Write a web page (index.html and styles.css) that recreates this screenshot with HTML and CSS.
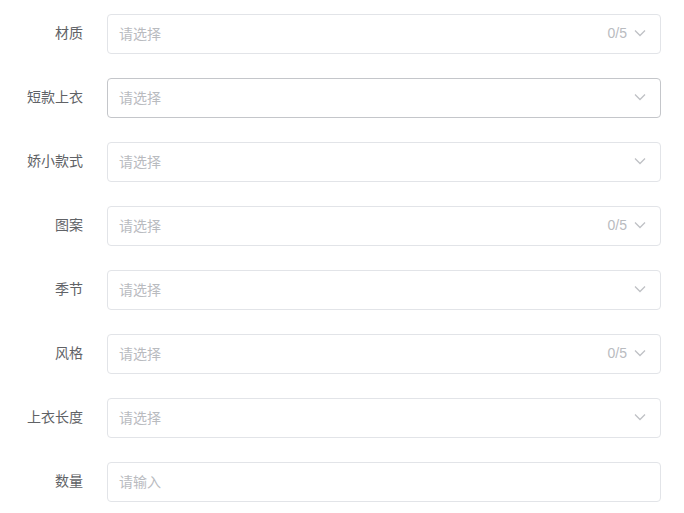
FILE: index.html
```html
<!DOCTYPE html>
<html>
<head>
<meta charset="utf-8">
<link rel="stylesheet" href="styles.css">
</head>
<body>
<form class="form">
  <div class="row"><label class="label">材质</label><div class="field"><span class="ph">请选择</span><span class="count">0/5</span><svg class="chev" viewBox="0 0 12 8"><path d="M1 1.5 L6 6.5 L11 1.5" /></svg></div></div>
  <div class="row"><label class="label">短款上衣</label><div class="field hover"><span class="ph">请选择</span><svg class="chev" viewBox="0 0 12 8"><path d="M1 1.5 L6 6.5 L11 1.5" /></svg></div></div>
  <div class="row"><label class="label">娇小款式</label><div class="field"><span class="ph">请选择</span><svg class="chev" viewBox="0 0 12 8"><path d="M1 1.5 L6 6.5 L11 1.5" /></svg></div></div>
  <div class="row"><label class="label">图案</label><div class="field"><span class="ph">请选择</span><span class="count">0/5</span><svg class="chev" viewBox="0 0 12 8"><path d="M1 1.5 L6 6.5 L11 1.5" /></svg></div></div>
  <div class="row"><label class="label">季节</label><div class="field"><span class="ph">请选择</span><svg class="chev" viewBox="0 0 12 8"><path d="M1 1.5 L6 6.5 L11 1.5" /></svg></div></div>
  <div class="row"><label class="label">风格</label><div class="field"><span class="ph">请选择</span><span class="count">0/5</span><svg class="chev" viewBox="0 0 12 8"><path d="M1 1.5 L6 6.5 L11 1.5" /></svg></div></div>
  <div class="row"><label class="label">上衣长度</label><div class="field"><span class="ph">请选择</span><svg class="chev" viewBox="0 0 12 8"><path d="M1 1.5 L6 6.5 L11 1.5" /></svg></div></div>
  <div class="row"><label class="label">数量</label><div class="field"><span class="ph">请输入</span></div></div>
</form>
</body>
</html>
```
FILE: styles.css
```css
html, body {
  margin: 0;
  padding: 0;
  background: #fff;
}
body {
  font-family: "Helvetica Neue", "Liberation Sans", "Noto Sans CJK SC", sans-serif;
  font-size: 14px;
}
.form {
  display: flex;
  flex-direction: column;
  gap: 24px;
  padding-top: 14px;
}
.row {
  display: flex;
  align-items: center;
  gap: 24px;
  height: 40px;
}
.label {
  width: 83px;
  text-align: right;
  color: #606266;
  font-size: 14px;
  line-height: 20px;
  padding-bottom: 2px;
}
.field {
  box-sizing: border-box;
  width: 554px;
  height: 40px;
  border: 1px solid #e2e4e8;
  border-radius: 4px;
  display: flex;
  align-items: center;
  padding: 0 14px 2px 11px;
}
.field.hover {
  border-color: #c4c6ca;
}
.ph {
  color: #b9bbbf;
  flex: 1;
}
.count {
  color: #b9bbbf;
  margin-right: 7px;
}
.chev {
  width: 12px;
  height: 8px;
  fill: none;
  stroke: #bfc1c5;
  stroke-width: 1.3;
}
```
